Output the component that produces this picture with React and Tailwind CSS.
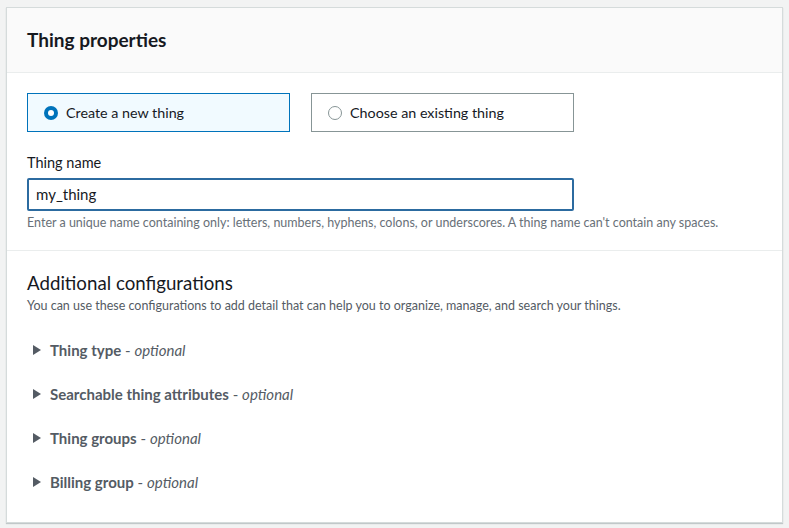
import React from 'react'

const SECTIONS = [
  'Thing type',
  'Searchable thing attributes',
  'Thing groups',
  'Billing group',
]

function Radio({ checked }) {
  return checked ? (
    <span className="w-[14px] h-[14px] rounded-full bg-[#0073bb] flex items-center justify-center shrink-0">
      <span className="w-[6px] h-[6px] rounded-full bg-white" />
    </span>
  ) : (
    <span className="w-[14px] h-[14px] rounded-full border-[1.5px] border-[#879596] bg-white shrink-0" />
  )
}

function Tile({ label, checked }) {
  return (
    <div
      className={`w-[263px] h-[39px] flex items-center gap-[8px] pl-[16px] border ${
        checked ? 'bg-[#f1faff] border-[#0073bb]' : 'bg-white border-[#879596]'
      }`}
    >
      <Radio checked={checked} />
      <span className="text-[14.3px] text-[#16191f]">{label}</span>
    </div>
  )
}

function Expander({ title }) {
  return (
    <div className="h-[44px] flex items-center gap-[9px] pl-[6px]">
      <svg width="8" height="10" viewBox="0 0 8 10" className="shrink-0">
        <path d="M0 0 L8 5 L0 10 Z" fill="#545b64" />
      </svg>
      <span className="text-[15px] text-[#545b64]">
        <span className="font-bold">{title}</span>
        <span> - </span>
        <span className="italic">optional</span>
      </span>
    </div>
  )
}

export default function App() {
  return (
    <div
      className="w-[789px] h-[528px] bg-[#f2f3f3] pt-[7px] pl-[6px]"
      style={{ fontFamily: 'Lato, "Open Sans", sans-serif' }}
    >
      <div className="w-[777px] h-[516px] bg-white border border-[#d5dbdb] shadow-[0_1px_1px_rgba(0,28,36,0.2)]">
        {/* Header */}
        <div className="h-[65px] bg-[#fafafa] border-b border-[#eaeded] flex items-center px-[20px]">
          <h2 className="text-[19px] font-bold text-[#16191f]">Thing properties</h2>
        </div>

        {/* Thing selection */}
        <div className="px-[20px] pt-[20px] pb-[19px] border-b border-[#eaeded]">
          <div className="flex gap-[21px]">
            <Tile label="Create a new thing" checked />
            <Tile label="Choose an existing thing" />
          </div>
          <div className="mt-[21px] text-[14.5px] leading-[20px] text-[#16191f]">Thing name</div>
          <div className="mt-[5px] w-[547px] h-[33px] border-2 border-[#2c6ba0] rounded-[2px] flex items-center px-[7px] text-[15px] text-[#16191f]">
            my_thing
          </div>
          <div className="mt-[4px] text-[12.5px] leading-[16px] text-[#687078]">
            Enter a unique name containing only: letters, numbers, hyphens, colons, or underscores. A thing name can't contain any spaces.
          </div>
        </div>

        {/* Additional configurations */}
        <div className="px-[20px] pt-[20px]">
          <h3 className="text-[18.7px] leading-[24px] text-[#16191f]">Additional configurations</h3>
          <p className="mt-[3px] text-[12.5px] leading-[16px] text-[#545b64]">
            You can use these configurations to add detail that can help you to organize, manage, and search your things.
          </p>
          <div className="mt-[14px]">
            {SECTIONS.map(s => (
              <Expander key={s} title={s} />
            ))}
          </div>
        </div>
      </div>
    </div>
  )
}
